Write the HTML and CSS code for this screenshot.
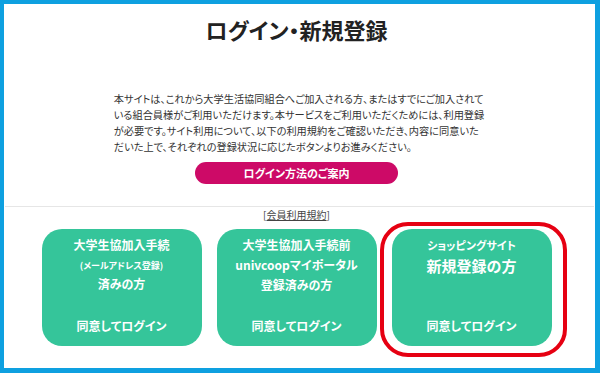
FILE: index.html
```html
<!DOCTYPE html>
<html lang="ja">
<head>
<meta charset="utf-8">
<title>ログイン・新規登録</title>
<link rel="stylesheet" href="styles.css">
</head>
<body>
<div class="frame">
  <main class="page">
    <h1 class="title">ログイン・新規登録</h1>
    <p class="intro">本サイトは、これから大学生活協同組合へご加入される方、またはすでにご加入されて<br>いる組合員様がご利用いただけます。本サービスをご利用いただくためには、利用登録<br>が必要です。サイト利用について、以下の利用規約をご確認いただき、内容に同意いた<br>だいた上で、それぞれの登録状況に応じたボタンよりお進みください。</p>
    <div class="guide-wrap"><a class="guide-btn" href="#">ログイン方法のご案内</a></div>
    <hr class="divider">
    <div class="terms">[<a href="#">会員利用規約</a>]</div>
    <div class="cards">
      <a class="card" href="#">
        <span class="line">大学生協加入手続</span>
        <span class="line small">(メールアドレス登録)</span>
        <span class="line">済みの方</span>
        <span class="agree">同意してログイン</span>
      </a>
      <a class="card" href="#">
        <span class="line">大学生協加入手続前</span>
        <span class="line">univcoopマイポータル</span>
        <span class="line">登録済みの方</span>
        <span class="agree">同意してログイン</span>
      </a>
      <a class="card card-new" href="#">
        <span class="line sub">ショッピングサイト</span>
        <span class="line big">新規登録の方</span>
        <span class="agree">同意してログイン</span>
      </a>
    </div>
  </main>
</div>
</body>
</html>
```

FILE: styles.css
```css
html, body {
  margin: 0;
  padding: 0;
}
body {
  background: #0ea0e0;
  font-family: "Noto Sans CJK JP", "Noto Sans", sans-serif;
  font-feature-settings: "palt";
  color: #333;
}
.frame {
  padding: 4px 5px 5px 4px;
}
.page {
  background: #fff;
  height: 364px;
  box-sizing: border-box;
  padding: 13px 6px 0 0;
  display: flex;
  flex-direction: column;
  align-items: center;
}
.title {
  margin: 0;
  font-size: 22px;
  line-height: 24px;
  font-weight: 700;
  color: #222;
}
.intro {
  margin: 50px 0 0 0;
  padding-left: 5px;
  font-size: 10.2px;
  line-height: 16px;
  white-space: nowrap;
  color: #333;
}
.guide-wrap {
  margin-top: 7px;
}
.guide-btn {
  display: flex;
  align-items: center;
  justify-content: center;
  width: 203px;
  height: 22px;
  border-radius: 11px;
  background: #cd0a67;
  color: #fff;
  font-size: 11px;
  font-weight: 700;
  text-decoration: none;
}
.divider {
  align-self: stretch;
  margin: 22px -5px 0 1px;
  border: 0;
  border-top: 1px solid #e6e6e6;
  height: 0;
}
.terms {
  margin-top: 1px;
  font-size: 10px;
  line-height: 14px;
  color: #444;
}
.terms a {
  color: #444;
  text-decoration: underline;
}
.cards {
  margin-top: 7px;
  display: flex;
  gap: 15px;
}
.card {
  position: relative;
  width: 160px;
  height: 117px;
  box-sizing: border-box;
  padding: 6px 0 12px;
  border-radius: 20px;
  background: #35c59a;
  color: #fff;
  text-decoration: none;
  font-weight: 700;
  display: flex;
  flex-direction: column;
  align-items: center;
  text-align: center;
}
.line {
  font-size: 12px;
  line-height: 20px;
}
.line.small {
  font-size: 9px;
  padding-top: 2px;
  line-height: 18px;
}
.line.small + .line {
  line-height: 18px;
}
.line.sub {
  font-size: 11px;
}
.line.big {
  font-size: 15px;
  line-height: 22px;
}
.agree {
  margin-top: auto;
  font-size: 12px;
  line-height: 16px;
}
.card-new::after {
  content: "";
  position: absolute;
  left: -12px;
  right: -15px;
  top: -7px;
  bottom: -11px;
  border: 4px solid #e60012;
  border-radius: 28px;
}
```
